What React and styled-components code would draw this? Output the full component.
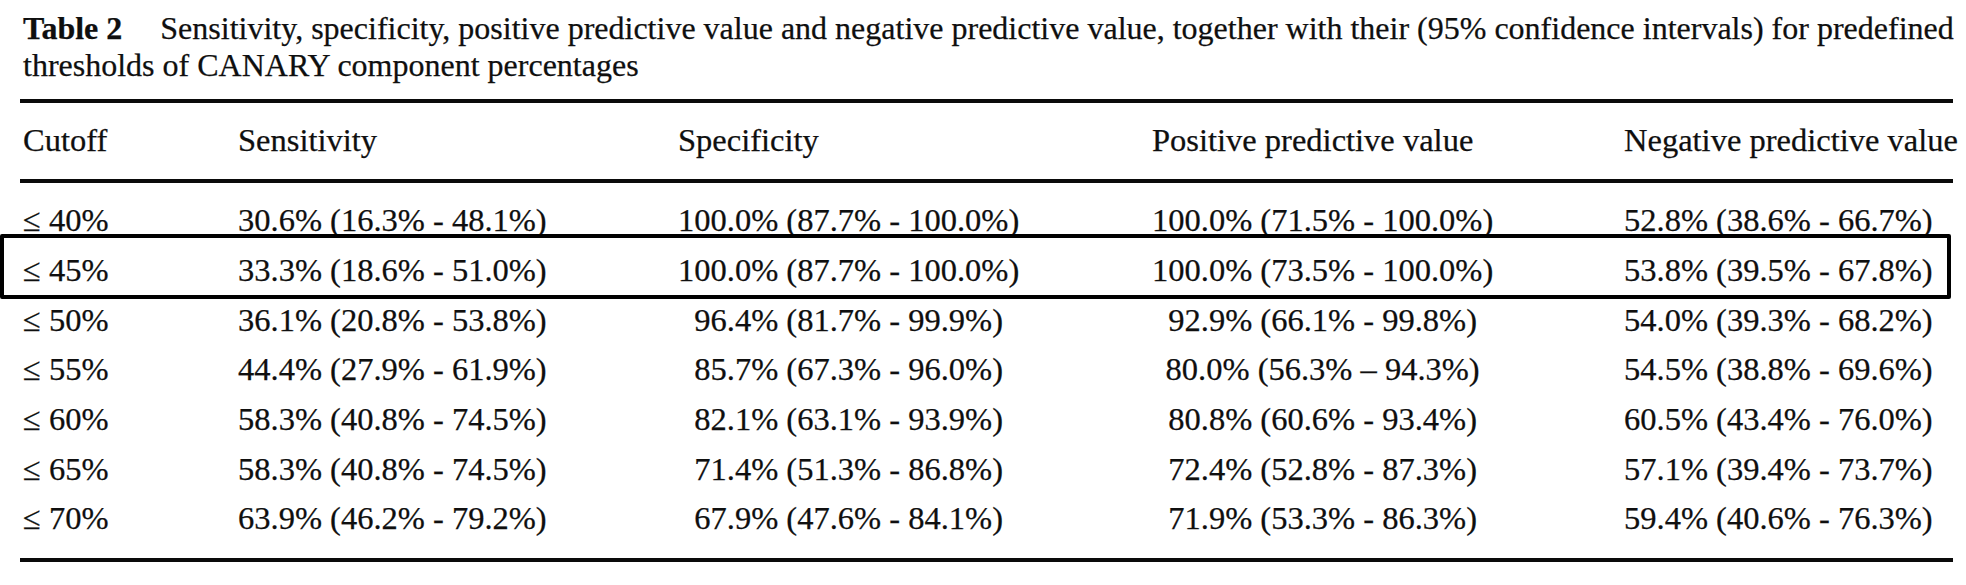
import React from "react";
import styled, { createGlobalStyle } from "styled-components";

const Global = createGlobalStyle`
  html, body { margin: 0; padding: 0; background: #ffffff; }
  body { font-family: "Liberation Serif", "Times New Roman", serif; color: #0f0f0f; }
`;

const Page = styled.div`
  padding: 10px 13px 0 20px;
  width: 1933px;
  -webkit-text-stroke: 0.25px #111;
`;

const Caption = styled.div`
  padding-left: 3px;
  font-size: 32px;
  line-height: 37px;
  white-space: nowrap;
`;

const Label = styled.span`
  font-weight: bold;
  margin-right: 38px;
`;

const Table = styled.div`
  margin-top: 15px;
  border-top: 4px solid #0a0a0a;
  border-bottom: 4px solid #0a0a0a;
  font-size: 32.5px;
`;

const Grid = styled.div`
  display: grid;
  grid-template-columns: 215px 440px 474px 472px 1fr;
  padding-left: 3px;
  line-height: 49.7px;
  white-space: nowrap;
  position: relative;
  ${(p) =>
    p.$highlight &&
    `
    &::after {
      content: "";
      position: absolute;
      left: -20px;
      right: 2px;
      top: -11.7px;
      bottom: -3.6px;
      border: 4px solid #000;
      border-radius: 2px;
      pointer-events: none;
    }
  `}
`;

const Head = styled(Grid)`
  padding-top: 13.2px;
  padding-bottom: 13.1px;
  border-bottom: 4px solid #0a0a0a;
`;

const Body = styled.div`
  padding: 13.2px 0 13.8px;
`;

const Cell = styled.div``;

const Centered = styled.span`
  display: inline-block;
  width: 10.5em;
  text-align: center;
`;

const rows = [
  ["40%", "30.6% (16.3% - 48.1%)", "100.0% (87.7% - 100.0%)", "100.0% (71.5% - 100.0%)", "52.8% (38.6% - 66.7%)"],
  ["45%", "33.3% (18.6% - 51.0%)", "100.0% (87.7% - 100.0%)", "100.0% (73.5% - 100.0%)", "53.8% (39.5% - 67.8%)"],
  ["50%", "36.1% (20.8% - 53.8%)", "96.4% (81.7% - 99.9%)", "92.9% (66.1% - 99.8%)", "54.0% (39.3% - 68.2%)"],
  ["55%", "44.4% (27.9% - 61.9%)", "85.7% (67.3% - 96.0%)", "80.0% (56.3% \u2013 94.3%)", "54.5% (38.8% - 69.6%)"],
  ["60%", "58.3% (40.8% - 74.5%)", "82.1% (63.1% - 93.9%)", "80.8% (60.6% - 93.4%)", "60.5% (43.4% - 76.0%)"],
  ["65%", "58.3% (40.8% - 74.5%)", "71.4% (51.3% - 86.8%)", "72.4% (52.8% - 87.3%)", "57.1% (39.4% - 73.7%)"],
  ["70%", "63.9% (46.2% - 79.2%)", "67.9% (47.6% - 84.1%)", "71.9% (53.3% - 86.3%)", "59.4% (40.6% - 76.3%)"],
];

export default function App() {
  return (
    <>
      <Global />
      <Page>
        <Caption>
          <Label>Table 2</Label>
          Sensitivity, specificity, positive predictive value and negative predictive value, together with their (95% confidence intervals) for predefined
          <br />
          thresholds of CANARY component percentages
        </Caption>
        <Table>
          <Head>
            <Cell>Cutoff</Cell>
            <Cell>Sensitivity</Cell>
            <Cell>Specificity</Cell>
            <Cell>Positive predictive value</Cell>
            <Cell>Negative predictive value</Cell>
          </Head>
          <Body>
            {rows.map((r, i) => (
              <Grid key={r[0]} $highlight={i === 1}>
                <Cell>{"\u2264 " + r[0]}</Cell>
                <Cell>{r[1]}</Cell>
                <Cell><Centered>{r[2]}</Centered></Cell>
                <Cell><Centered>{r[3]}</Centered></Cell>
                <Cell>{r[4]}</Cell>
              </Grid>
            ))}
          </Body>
        </Table>
      </Page>
    </>
  );
}
